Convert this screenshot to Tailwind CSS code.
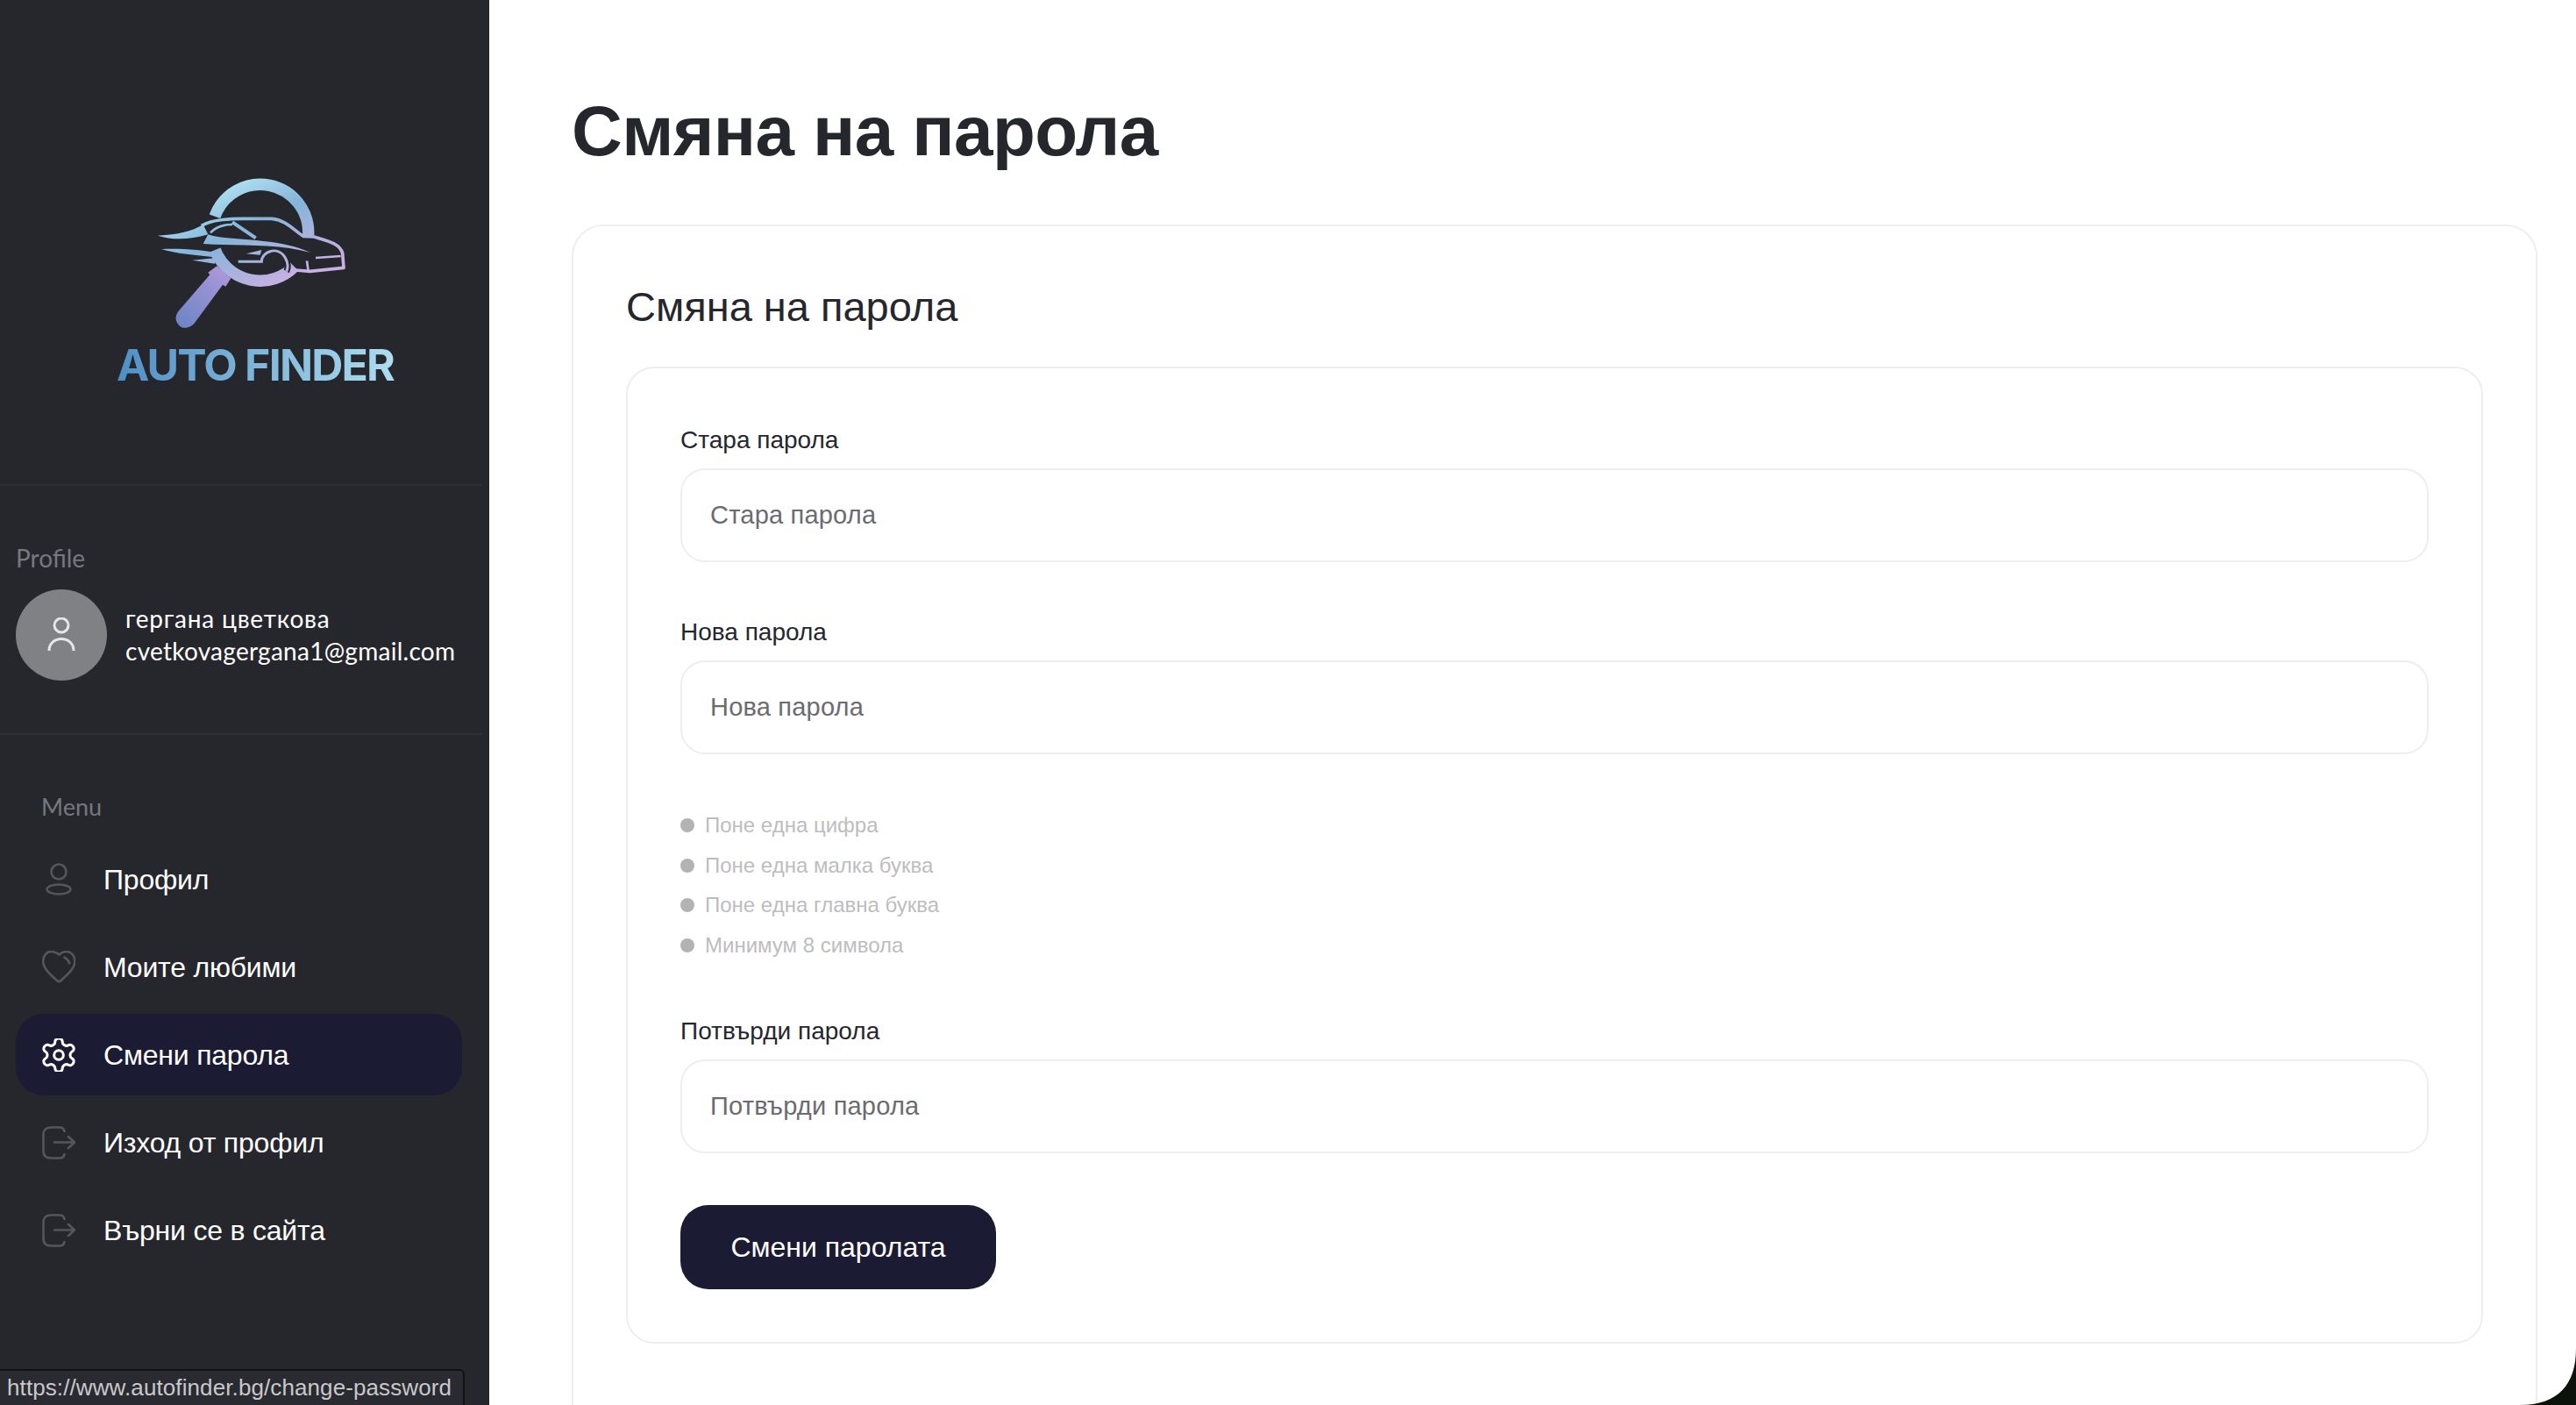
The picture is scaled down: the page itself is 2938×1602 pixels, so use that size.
<!DOCTYPE html>
<html lang="bg"><head><meta charset="utf-8"><script src="https://cdn.jsdelivr.net/npm/@tailwindcss/browser@4"></script></head>
<body class="m-0 overflow-hidden bg-white">
<div class="relative flex h-[1602px] w-[2938px] overflow-hidden font-['Liberation_Sans',sans-serif]">
<aside class="flex h-full w-[558px] shrink-0 flex-col bg-[#26272d] text-white">
  <div class="h-[554px] w-[550px] border-b-2 border-[#2e2f35] pt-[190px]">
    <svg class="ml-[150px] block h-[200px] w-[320px]" viewBox="0 0 960 600" fill="none">
      <defs>
        <linearGradient id="g" gradientUnits="userSpaceOnUse" x1="300" y1="40" x2="480" y2="420"><stop offset="0" stop-color="#b9e8f5"/><stop offset=".45" stop-color="#84b5da"/><stop offset="1" stop-color="#c9b0e2"/></linearGradient>
        <linearGradient id="h" gradientUnits="userSpaceOnUse" x1="310" y1="370" x2="170" y2="540"><stop offset="0" stop-color="#a896d8"/><stop offset="1" stop-color="#6f85c6"/></linearGradient>
      </defs>
      <path d="M285 170A165 165 0 0 1 605 235" stroke="url(#g)" stroke-width="40"/>
      <path d="M286 285A165 165 0 0 0 557 342" stroke="url(#g)" stroke-width="40"/>
      <path d="M292 340L340 382 322 410 312 404 218 532C205 552 175 560 160 540 148 525 150 510 160 495L268 370 262 362Z" fill="url(#h)"/>
      <path d="M240 202C268 184 320 178 380 178L480 178C530 182 560 222 588 238L625 240C670 254 712 262 722 296L726 346 610 358 560 354" stroke="url(#g)" stroke-width="11" stroke-linejoin="round"/>
      <path d="M90 236C160 232 205 222 245 198L262 232C200 250 140 252 90 236Z" fill="url(#g)"/>
      <path d="M262 232C330 256 500 240 612 294 500 262 360 272 245 264Z" fill="url(#g)"/>
      <path d="M345 190L425 244" stroke="url(#g)" stroke-width="12"/>
      <path d="M270 226C290 204 320 198 345 198" stroke="url(#g)" stroke-width="8"/>
      <path d="M102 282C170 280 240 283 305 298L300 312C220 302 150 298 102 282ZM208 320L290 312 285 332Z" fill="url(#g)"/>
      <path d="M365 325H445C445 290 500 270 525 310 538 330 535 350 530 358" stroke="#26272d" stroke-width="22"/>
      <path d="M365 325H445C445 290 500 270 525 310 538 330 535 350 530 358" stroke="url(#g)" stroke-width="9"/>
      <path d="M392 298L445 285 440 302Z" fill="url(#g)"/>
      <path d="M630 312L716 306M600 322L605 358" stroke="url(#g)" stroke-width="8"/>
    </svg>
    <div class="ml-[133px] mt-[-4px] w-[330px] bg-gradient-to-r from-[#4f8fc4] to-[#b2e0f1] bg-clip-text font-['Inter',sans-serif] text-[50px] leading-[60px] font-bold tracking-[-1.800px] whitespace-nowrap text-transparent">AUTO FINDER</div>
  </div>
  <div class="h-[284px] w-[550px] border-b-2 border-[#2e2f35] pl-[18px] pt-[66px] font-['Lato',sans-serif]">
    <div class="text-[28px] leading-[32px] text-[#77787d]">Profile</div>
    <div class="mt-[20px] flex items-center gap-[21px]">
      <div class="flex h-[104px] w-[104px] items-center justify-center rounded-full bg-[#808185]">
        <svg class="h-[40px] w-[32px]" viewBox="0 0 32 40" fill="none" stroke="#e6e6e8" stroke-width="3"><circle cx="16" cy="9" r="8"/><path d="M2 38C2 20 30 20 30 38"/></svg>
      </div>
      <div class="flex flex-col gap-[8px]">
        <div class="text-[28px] leading-[29px] tracking-[.8px]">гергана цветкова</div>
        <div class="text-[28px] leading-[29px] tracking-[.27px]">cvetkovagergana1@gmail.com</div>
      </div>
    </div>
  </div>
  <div class="pl-[18px] pt-[66px]">
    <div class="pl-[29px] font-['Lato',sans-serif] text-[27px] leading-[32px] text-[#77787d]">Menu</div>
    <nav class="mt-[20px] flex w-[509px] flex-col gap-[7px] text-[32px] tracking-[-.2px]">
      <a class="flex h-[93px] items-center gap-[32px] rounded-[32px] pl-[30px]"><svg class="h-[40px] w-[38px]" viewBox="0 0 38 40" fill="none" stroke="#55565c" stroke-width="2.600"><circle cx="19" cy="11" r="8.500"/><ellipse cx="19" cy="31" rx="13.500" ry="5.500"/></svg>Профил</a>
      <a class="flex h-[93px] items-center gap-[32px] rounded-[32px] pl-[30px]"><svg class="h-[38px] w-[38px]" viewBox="0 0 38 38" fill="none" stroke="#55565c" stroke-width="2.600" stroke-linecap="round"><path d="M19.300 4.500C16 1.500 13 1 10 1 5 1 1.200 6 1.200 12 1.200 20 9 27 17 34 18.500 35.500 20 35.500 21.500 34 29 27 37.500 20 37.500 12 37.500 6 33 1 28 1 25 1 22 2 19.300 4.500Z"/><path d="M25.300 7.700C28 9 30.300 11.500 31.300 14.300"/></svg>Моите любими</a>
      <a class="flex h-[93px] items-center gap-[32px] rounded-[32px] bg-[#1b1c33] pl-[30px]"><svg class="h-[38px] w-[38px]" viewBox="2 2 20 20" fill="none" stroke="#fff" stroke-width="1.600" stroke-linecap="round" stroke-linejoin="round"><path d="M12.220 2h-.44a2 2 0 0 0-2 2v.18a2 2 0 0 1-1 1.730l-.43.25a2 2 0 0 1-2 0l-.15-.08a2 2 0 0 0-2.730.73l-.22.38a2 2 0 0 0 .73 2.730l.15.1a2 2 0 0 1 1 1.720v.51a2 2 0 0 1-1 1.740l-.15.09a2 2 0 0 0-.73 2.730l.22.38a2 2 0 0 0 2.730.73l.15-.08a2 2 0 0 1 2 0l.43.25a2 2 0 0 1 1 1.730V20a2 2 0 0 0 2 2h.44a2 2 0 0 0 2-2v-.18a2 2 0 0 1 1-1.730l.43-.25a2 2 0 0 1 2 0l.15.08a2 2 0 0 0 2.730-.73l.22-.39a2 2 0 0 0-.73-2.730l-.15-.08a2 2 0 0 1-1-1.740v-.5a2 2 0 0 1 1-1.740l.15-.09a2 2 0 0 0 .73-2.730l-.22-.38a2 2 0 0 0-2.730-.73l-.15.08a2 2 0 0 1-2 0l-.43-.25a2 2 0 0 1-1-1.730V4a2 2 0 0 0-2-2z"/><circle cx="12" cy="12" r="2.800"/></svg>Смени парола</a>
      <a class="flex h-[93px] items-center gap-[32px] rounded-[32px] pl-[30px]"><svg class="h-[38px] w-[38px]" viewBox="0 0 38 38" fill="none" stroke="#55565c" stroke-width="2.600" stroke-linecap="round" stroke-linejoin="round"><path d="M25.500 6C25 3 23 1.500 20 1.500H10C4.500 1.500 1.500 4.500 1.500 9.500V28.500C1.500 33.500 4.500 36.500 10 36.500H20C23 36.500 25 35 25.500 32M14 18.500H37M30 12L37 18.500 30 25"/></svg>Изход от профил</a>
      <a class="flex h-[93px] items-center gap-[32px] rounded-[32px] pl-[30px]"><svg class="h-[38px] w-[38px]" viewBox="0 0 38 38" fill="none" stroke="#55565c" stroke-width="2.600" stroke-linecap="round" stroke-linejoin="round"><path d="M25.500 6C25 3 23 1.500 20 1.500H10C4.500 1.500 1.500 4.500 1.500 9.500V28.500C1.500 33.500 4.500 36.500 10 36.500H20C23 36.500 25 35 25.500 32M14 18.500H37M30 12L37 18.500 30 25"/></svg>Върни се в сайта</a>
    </nav>
  </div>
</aside>
<main class="min-w-0 flex-1 pl-[94px] pr-[44px] pt-[104px] text-[#26272d]">
  <h1 class="text-[80px] leading-[92px] font-bold tracking-[-.6px]">Смяна на парола</h1>
  <section class="mt-[60px] h-[1400px] rounded-[36px] border-2 border-[#eeeeef] px-[60px] pt-[64px]">
    <h2 class="text-[47px] leading-[56px]">Смяна на парола</h2>
    <div class="mt-[40px] h-[1114px] rounded-[32px] border-2 border-[#eeeeef] px-[60px] pt-[65px]">
      <label class="block text-[28px] leading-[34px]">Стара парола</label>
      <div class="mt-[15px] flex h-[107px] items-center rounded-[28px] border-2 border-[#eeeeef] pl-[32px] text-[29px] tracking-[.2px] text-[#6b6b70]">Стара парола</div>
      <label class="mt-[63px] block text-[28px] leading-[34px]">Нова парола</label>
      <div class="mt-[15px] flex h-[107px] items-center rounded-[28px] border-2 border-[#eeeeef] pl-[32px] text-[29px] tracking-[.2px] text-[#6b6b70]">Нова парола</div>
      <ul class="mt-[66px] flex flex-col gap-[15.500px] text-[24px] leading-[30px] text-[#bdbdbf]">
        <li class="flex items-center gap-[12px]"><span class="h-[16px] w-[16px] rounded-full bg-[#b3b3b4]"></span>Поне една цифра</li>
        <li class="flex items-center gap-[12px]"><span class="h-[16px] w-[16px] rounded-full bg-[#b3b3b4]"></span>Поне една малка буква</li>
        <li class="flex items-center gap-[12px]"><span class="h-[16px] w-[16px] rounded-full bg-[#b3b3b4]"></span>Поне една главна буква</li>
        <li class="flex items-center gap-[12px]"><span class="h-[16px] w-[16px] rounded-full bg-[#b3b3b4]"></span>Минимум 8 символа</li>
      </ul>
      <label class="mt-[66.500px] block text-[28px] leading-[34px]">Потвърди парола</label>
      <div class="mt-[15px] flex h-[107px] items-center rounded-[28px] border-2 border-[#eeeeef] pl-[32px] text-[29px] tracking-[.2px] text-[#6b6b70]">Потвърди парола</div>
      <button class="mt-[59px] h-[96px] w-[360px] rounded-[32px] bg-[#1b1c33] text-[32px] text-white">Смени паролата</button>
    </div>
  </section>
</main>
<div class="absolute bottom-0 left-0 flex h-[41px] w-[530px] items-center rounded-tr-[6px] border-t-2 border-r-2 border-[#111] bg-[#2a2b30] pl-[8px] text-[26px] tracking-[.1px] whitespace-nowrap text-[#c8c8cb]">https://www.autofinder.bg/change-password</div>
<svg class="absolute right-0 bottom-0 h-[64px] w-[64px]" viewBox="0 0 64 64"><path d="M64 0C64 40 44 64 0 64H64Z" fill="#0a120a"/></svg>
</div>
</body></html>
